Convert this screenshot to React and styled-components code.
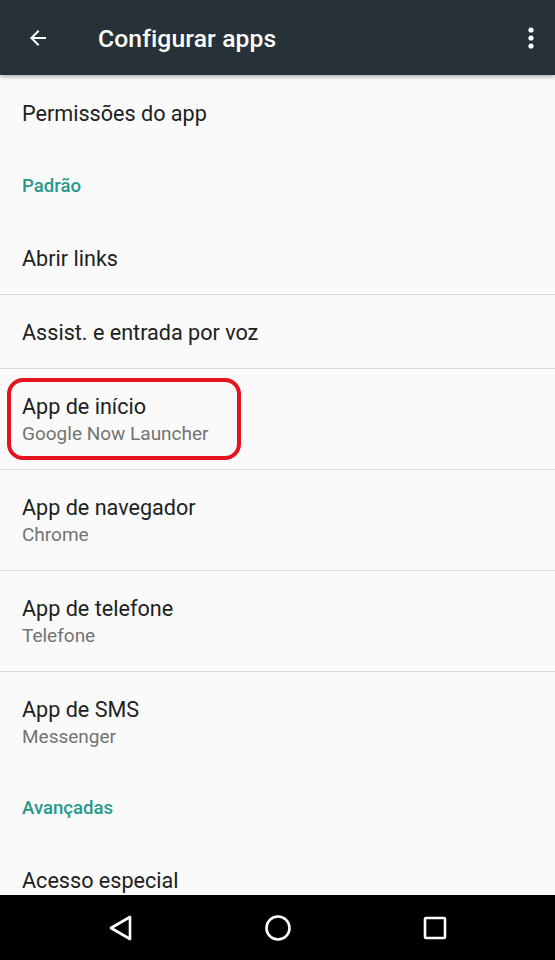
import React from 'react';
import styled, { createGlobalStyle } from 'styled-components';

const GlobalStyle = createGlobalStyle`
  html, body {
    margin: 0;
    padding: 0;
    background: #fafafa;
    font-family: Roboto, "Noto Sans", sans-serif;
  }
  * { box-sizing: border-box; }
`;

const sections = [
  { items: [{ title: 'Permissões do app' }] },
  {
    header: 'Padrão',
    items: [
      { title: 'Abrir links' },
      { title: 'Assist. e entrada por voz' },
      { title: 'App de início', subtitle: 'Google Now Launcher', marked: true },
      { title: 'App de navegador', subtitle: 'Chrome' },
      { title: 'App de telefone', subtitle: 'Telefone' },
      { title: 'App de SMS', subtitle: 'Messenger' },
    ],
  },
  {
    header: 'Avançadas',
    items: [{ title: 'Acesso especial' }],
  },
];

const Screen = styled.div`
  height: 100vh;
  display: flex;
  flex-direction: column;
  background: #fafafa;
  overflow: hidden;
`;

const AppBar = styled.header`
  height: 75px;
  flex-shrink: 0;
  background: #263238;
  display: flex;
  align-items: center;
  padding: 0 14px 0 22px;
  box-shadow: 0 2px 4px rgba(0, 0, 0, 0.28);
  position: relative;
  z-index: 2;
`;

const IconButton = styled.button`
  border: 0;
  background: none;
  padding: 0;
  width: ${(p) => p.size || 32}px;
  height: 32px;
  display: flex;
  align-items: center;
  justify-content: center;
  color: #fff;
`;

const Title = styled.h1`
  margin: 2px 0 0 44px;
  flex: 1;
  color: #fff;
  font-size: 24.7px;
  font-weight: 500;
  letter-spacing: 0.1px;
`;

const List = styled.main`
  flex: 1;
  overflow: hidden;
`;

const SectionHeader = styled.div`
  height: 70px;
  display: flex;
  align-items: center;
  padding: 1px 22px 0;
  color: #27998a;
  font-size: 18.6px;
  font-weight: 500;
`;

const Row = styled.div`
  position: relative;
  min-height: ${(p) => (p.twoLine ? 101 : 74)}px;
  padding: 2px 22px 0;
  display: flex;
  flex-direction: column;
  justify-content: center;
  border-top: ${(p) => (p.divider ? '1px solid #dcdcdc' : '0')};
`;

const FirstRow = styled(Row)`
  min-height: 75px;
`;

const RowTitle = styled.div`
  color: #212121;
  font-size: 21.6px;
  line-height: 27px;
`;

const RowSubtitle = styled.div`
  color: #737373;
  font-size: 19px;
  line-height: 27px;
`;

const Marker = styled.div`
  position: absolute;
  left: 7px;
  top: 9px;
  width: 234px;
  height: 82px;
  border: 4px solid #e3141d;
  border-radius: 16px;
  pointer-events: none;
`;

const NavBar = styled.nav`
  height: 65px;
  flex-shrink: 0;
  background: #000;
  display: grid;
  grid-template-columns: repeat(3, 1fr);
  padding: 0 42px;
  align-items: center;
  justify-items: center;
`;

const BackIcon = () => (
  <svg width="24" height="24" viewBox="0 0 24 24" fill="#fff">
    <path d="M20 11H7.83l5.59-5.59L12 4l-8 8 8 8 1.41-1.41L7.83 13H20v-2z" />
  </svg>
);

const MoreIcon = () => (
  <svg width="6" height="22" viewBox="0 0 6 22" fill="#fff">
    <circle cx="3" cy="3" r="2.6" />
    <circle cx="3" cy="11" r="2.6" />
    <circle cx="3" cy="19" r="2.6" />
  </svg>
);

const NavBack = () => (
  <svg width="26" height="28" viewBox="0 0 26 28" fill="none" stroke="#fff" strokeWidth="2.6" strokeLinejoin="round">
    <path d="M22 3 L3 14 L22 25 Z" />
  </svg>
);

const NavHome = () => (
  <svg width="28" height="28" viewBox="0 0 28 28" fill="none" stroke="#fff" strokeWidth="2.6">
    <circle cx="14" cy="14" r="11.5" />
  </svg>
);

const NavRecent = () => (
  <svg width="24" height="24" viewBox="0 0 24 24" fill="none" stroke="#fff" strokeWidth="2.6">
    <rect x="2" y="2" width="20" height="20" rx="1" />
  </svg>
);

const Item = ({ item, divider }) => (
  <Row twoLine={!!item.subtitle} divider={divider}>
    <RowTitle>{item.title}</RowTitle>
    {item.subtitle && <RowSubtitle>{item.subtitle}</RowSubtitle>}
    {item.marked && <Marker />}
  </Row>
);

export default function App() {
  const [first, ...rest] = sections;
  return (
    <>
      <GlobalStyle />
      <Screen>
        <AppBar>
          <IconButton><BackIcon /></IconButton>
          <Title>Configurar apps</Title>
          <IconButton size={20}><MoreIcon /></IconButton>
        </AppBar>
        <List>
          <FirstRow>
            <RowTitle>{first.items[0].title}</RowTitle>
          </FirstRow>
          {rest.map((section) => (
            <section key={section.header}>
              <SectionHeader>{section.header}</SectionHeader>
              {section.items.map((item, i) => (
                <Item key={item.title} item={item} divider={i > 0} />
              ))}
            </section>
          ))}
        </List>
        <NavBar>
          <NavBack />
          <NavHome />
          <NavRecent />
        </NavBar>
      </Screen>
    </>
  );
}
